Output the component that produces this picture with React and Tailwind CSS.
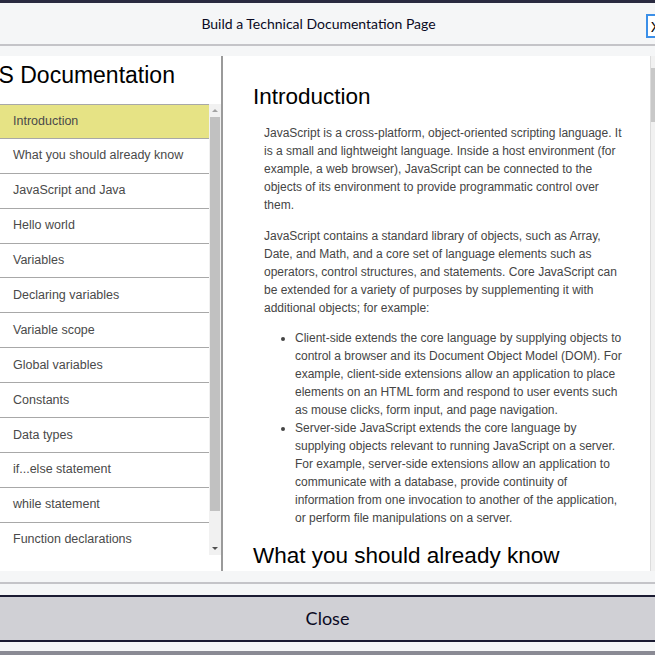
import React from 'react';

const navItems = [
  'Introduction',
  'What you should already know',
  'JavaScript and Java',
  'Hello world',
  'Variables',
  'Declaring variables',
  'Variable scope',
  'Global variables',
  'Constants',
  'Data types',
  'if...else statement',
  'while statement',
  'Function declarations',
  'Reference',
];

const Sidebar = () => (
  <nav className="w-[223px] shrink-0 border-r-2 border-[#9a9a9a] bg-white flex flex-col overflow-hidden">
    {/* header is clipped on the left in the preview */}
    <header className="h-[48px] shrink-0 flex items-center whitespace-nowrap text-[23px] text-black -ml-[13px] pb-[9px]">
      JS Documentation
    </header>
    <div className="h-[451px] flex">
      <ul className="w-[209px] overflow-hidden">
        {navItems.map((item, i) => (
          <li
            key={item}
            className={`h-[34.9px] flex items-center pl-[13px] text-[12.5px] text-[#4a4a4a] border-b border-[#a8a8a8] ${
              i === 0 ? 'bg-[#e6e385] border-t' : 'bg-white'
            }`}
          >
            {item}
          </li>
        ))}
      </ul>
      {/* fake scrollbar */}
      <div className="w-[12px] bg-[#f1f1f1] flex flex-col items-center">
        <div className="h-[13px] flex items-center justify-center">
          <div className="w-0 h-0 border-l-[3px] border-r-[3px] border-b-[3px] border-l-transparent border-r-transparent border-b-[#a3a3a3]" />
        </div>
        <div className="w-[10px] h-[394px] bg-[#c1c1c1]" />
        <div className="flex-1 flex items-end justify-center pb-[5px]">
          <div className="w-0 h-0 border-l-[3px] border-r-[3px] border-t-[3px] border-l-transparent border-r-transparent border-t-[#505050]" />
        </div>
      </div>
    </div>
  </nav>
);

const Content = () => (
  <main className="flex-1 bg-white overflow-hidden pl-[30px] pr-[26px] pt-[26px]">
    <section>
      <h2 className="text-[22.5px] leading-[30px] text-black mb-[12px]">Introduction</h2>
      <article className="pl-[11px] text-[12px] leading-[18px] text-[#454545]">
        <p className="mb-[13px]">
          JavaScript is a cross-platform, object-oriented scripting language. It is a small and
          lightweight language. Inside a host environment (for example, a web browser), JavaScript
          can be connected to the objects of its environment to provide programmatic control over
          them.
        </p>
        <p className="mb-[12px]">
          JavaScript contains a standard library of objects, such as Array, Date, and Math, and a
          core set of language elements such as operators, control structures, and statements. Core
          JavaScript can be extended for a variety of purposes by supplementing it with additional
          objects; for example:
        </p>
        <ul className="list-disc pl-[31px]">
          <li>
            Client-side extends the core language by supplying objects to control a browser and its
            Document Object Model (DOM). For example, client-side extensions allow an application to
            place elements on an HTML form and respond to user events such as mouse clicks, form
            input, and page navigation.
          </li>
          <li>
            Server-side JavaScript extends the core language by supplying objects relevant to
            running JavaScript on a server. For example, server-side extensions allow an application
            to communicate with a database, provide continuity of information from one invocation to
            another of the application, or perform file manipulations on a server.
          </li>
        </ul>
      </article>
    </section>
    <section className="mt-[14px]">
      <h2 className="text-[22.5px] leading-[30px] text-black">What you should already know</h2>
    </section>
  </main>
);

export default function App() {
  return (
    <div
      className="w-[655px] h-[655px] overflow-hidden bg-[#f5f6f7] flex flex-col"
      style={{ fontFamily: '"Liberation Sans", Arial, sans-serif' }}
    >
      <div className="h-[3px] shrink-0 bg-[#2a2a40]" />
      {/* modal header */}
      <div className="h-[43px] shrink-0 relative flex items-center justify-center pr-[18px] border-b-2 border-[#c4c4c8] font-['Lato',sans-serif] text-[14px] text-[#0a0a23]">
        Build a Technical Documentation Page
        <button className="absolute right-[-14px] top-[11px] w-[23px] h-[24px] border-2 border-[#3b8fe8] bg-white flex items-center pl-[3px] text-[14px] text-black">
          X
        </button>
      </div>
      {/* preview frame */}
      <div className="h-[538px] shrink-0 pt-[10px] pb-[11px] border-b-2 border-[#c4c4c8]">
        <div className="h-full flex">
          <Sidebar />
          <Content />
          <div className="w-[5px] bg-[#f1f1f1] border-l border-[#dcdcdc]">
            <div className="mt-[12px] h-[54px] bg-[#c8c8c8]" />
          </div>
        </div>
      </div>
      <div className="h-[11px] shrink-0" />
      <button className="h-[47px] shrink-0 border-t-2 border-b-2 border-[#1b1b32] bg-[#d0d0d5] font-['Lato',sans-serif] text-[18px] text-[#0a0a23]">
        Close
      </button>
      <div className="flex-1 flex flex-col justify-end">
        <div className="h-[4px] bg-[#8a8a94]" />
      </div>
    </div>
  );
}
